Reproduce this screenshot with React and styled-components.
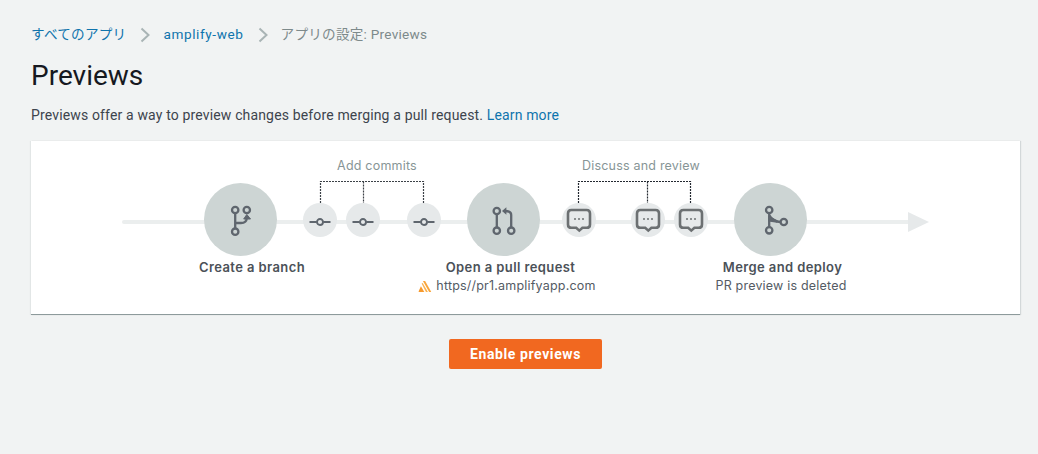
import React from "react";
import styled, { createGlobalStyle } from "styled-components";

const GlobalStyle = createGlobalStyle`
  html, body {
    margin: 0;
    padding: 0;
    background: #f1f3f3;
    font-family: Roboto, "Noto Sans CJK JP", sans-serif;
  }
`;

const Page = styled.div`
  box-sizing: border-box;
  width: 1038px;
  height: 454px;
  padding: 26px 18px 0 31px;
  overflow: hidden;
`;

const Breadcrumbs = styled.nav`
  display: flex;
  align-items: center;
  height: 17px;
  font-size: 13.6px;
  line-height: 17px;
  letter-spacing: 0.2px;
`;

const Crumb = styled.a`
  color: ${(p) => (p.$current ? "#7d8a8b" : "#0f74ad")};
  letter-spacing: ${(p) => (p.$wide ? 0.6 : 0.25)}px;
  white-space: nowrap;
`;

const Chevron = styled.svg`
  display: block;
  width: 10px;
  height: 16px;
  margin: 0 13px 0 14px;
  fill: none;
  stroke: #a9b4b5;
  stroke-width: 2;
`;

const Title = styled.h1`
  margin: 16px 0 0;
  font-size: 28px;
  line-height: 34px;
  font-weight: 400;
  color: #16191f;
`;

const Intro = styled.p`
  margin: 13px 0 0;
  font-size: 14px;
  line-height: 18px;
  letter-spacing: 0.15px;
  color: #3d444d;
`;

const Link = styled.a`
  color: #0f74ad;
`;

const Card = styled.section`
  margin-top: 17px;
  height: 173px;
  background: #fff;
  border-bottom: 1px solid #8d9a9b;
  box-shadow: 1px 0 1px rgba(0, 28, 36, 0.12), -1px 0 1px rgba(0, 28, 36, 0.06);
`;

/* free canvas: everything inside is a node of the diagram */
const Diagram = styled.div`
  position: relative;
  width: 100%;
  height: 100%;
`;

const Wires = styled.svg`
  position: absolute;
  left: 0;
  top: 0;
  width: 989px;
  height: 173px;
`;

const Node = styled.div`
  position: absolute;
  left: ${(p) => p.$x}px;
  top: ${(p) => (p.$big ? 42 : 62)}px;
  width: ${(p) => (p.$big ? 73 : 34)}px;
  height: ${(p) => (p.$big ? 73 : 34)}px;
  margin-left: ${(p) => (p.$big ? -36.5 : -17)}px;
  border-radius: 50%;
  background: ${(p) => (p.$big ? "#cdd5d4" : "#e6e9ea")};
  display: flex;
  align-items: center;
  justify-content: center;
`;

const Glyph = styled.svg`
  display: block;
  width: 40px;
  height: 40px;
  flex: none;
  fill: none;
  stroke: ${(p) => p.$color || "#5f666e"};
  stroke-width: ${(p) => p.$stroke || 2.3};
`;

const Label = styled.div`
  position: absolute;
  left: ${(p) => p.$x}px;
  top: ${(p) => p.$y}px;
  transform: translateX(-50%);
  display: flex;
  align-items: center;
  gap: 5px;
  white-space: nowrap;
  font-family: Inter, "Noto Sans", sans-serif;
  font-size: ${(p) => (p.$bold ? 13 : 12.5)}px;
  line-height: 16px;
  letter-spacing: ${(p) => (p.$bold ? 0.4 : 0.2)}px;
  font-weight: ${(p) => (p.$bold ? 600 : 400)};
  color: ${(p) => (p.$note ? "#879596" : p.$bold ? "#4b5158" : "#545b64")};
`;

const Actions = styled.div`
  display: flex;
  justify-content: center;
  margin-top: 24px;
`;

const Button = styled.button`
  width: 153px;
  height: 30px;
  border: 0;
  border-radius: 2px;
  background: #f16820;
  color: #fff;
  font-family: Roboto, sans-serif;
  font-size: 14px;
  font-weight: 700;
  letter-spacing: 0.6px;
  cursor: pointer;
`;

const Ring = ({ x, y }) => <circle cx={x} cy={y} r="3.2" />;

const BranchIcon = () => (
  <Glyph viewBox="-20 -20 40 40">
    <Ring x={-5.8} y={-10} />
    <Ring x={5.8} y={-10} />
    <Ring x={-5.8} y={11.7} />
    <path d="M-5.8 -6.8V8.5M-5.8 3H0Q5.5 3 5.8 -2" />
    <path d="M2.7 -1L5.8 -5.5L9.5 -1Z" fill="#5f666e" strokeWidth="1" />
  </Glyph>
);

const PullIcon = () => (
  <Glyph viewBox="-20 -20 40 40">
    <Ring x={-7.2} y={-9} />
    <Ring x={-7.2} y={10.7} />
    <Ring x={7.2} y={10.7} />
    <path d="M-7.2 -5.8V7.5M7.2 7.5V-5C7.2 -8 5 -9 1 -9" />
    <path d="M-2 -9L2.4 -12.8V-5.2Z" fill="#5f666e" stroke="none" />
  </Glyph>
);

const MergeIcon = () => (
  <Glyph viewBox="-20 -20 40 40">
    <Ring x={-1.8} y={-10} />
    <Ring x={-1.8} y={10.3} />
    <Ring x={12.8} y={2} />
    <path d="M-1.8 -6.8V7.1M9.6 2C5 2 0 -1 -1.8 -5" />
    <path d="M-2.6 -4L-.8 -3.6L7 .8L6 2.8L-2.6 1.4Z" fill="#5f666e" stroke="none" />
  </Glyph>
);

const CommitIcon = () => (
  <Glyph viewBox="-20 -20 40 40" $stroke={1.9}>
    <path d="M-10.5 2H-3.2M3.2 2H10.5" />
    <circle cx="0" cy="2" r="3" />
  </Glyph>
);

const CommentIcon = () => (
  <Glyph viewBox="-20 -20 40 40" $color="#6c7072" $stroke={2.6}>
    <path d="M-7.6 -10H7.6Q11 -10 11 -6.6V4.4Q11 7.8 7.6 7.8H3.4L.3 10.6L-2.8 7.8H-7.6Q-11 7.8 -11 4.4V-6.6Q-11 -10 -7.6 -10Z" />
    <circle cx="-4" cy="-1" r="1" fill="#6c7072" stroke="none" />
    <circle cx="0" cy="-1" r="1" fill="#6c7072" stroke="none" />
    <circle cx="4" cy="-1" r="1" fill="#6c7072" stroke="none" />
  </Glyph>
);

const AmplifyLogo = () => (
  <svg width="13" height="11" viewBox="0 0 13 11" style={{ display: "block" }}>
    <path d="M4.6 0H6.8L13 11H10.8Z" fill="#f9a63c" />
    <path d="M3.3 2.4L4.4 1.9L9.6 11H7.6Z" fill="#fbb24e" />
    <path d="M2.6 5.2L6 11H0Z" fill="#f79a2e" />
  </svg>
);

const commits = [289, 332, 393];
const comments = [548, 617, 660];

function App() {
  return (
    <Page>
      <GlobalStyle />
      <Breadcrumbs>
        <Crumb>すべてのアプリ</Crumb>
        <Chevron viewBox="0 0 10 16">
          <path d="M1.5 1.5L8.5 8L1.5 14.5" />
        </Chevron>
        <Crumb $wide>amplify-web</Crumb>
        <Chevron viewBox="0 0 10 16">
          <path d="M1.5 1.5L8.5 8L1.5 14.5" />
        </Chevron>
        <Crumb $current>アプリの設定: Previews</Crumb>
      </Breadcrumbs>
      <Title>Previews</Title>
      <Intro>
        Previews offer a way to preview changes before merging a pull request.{" "}
        <Link>Learn more</Link>
      </Intro>
      <Card>
        <Diagram>
          <Wires viewBox="0 0 989 173">
            <rect x="91" y="79" width="790" height="4" rx="2" fill="#ebeeee" />
            <path d="M877 71L898 81L877 91Z" fill="#e6e9ea" />
            <path
              d="M289.5 62V40.5H392.5V62M332.5 40.5V62"
              fill="none"
              stroke="#3c4147"
              strokeDasharray="2 1"
              strokeWidth="1.2"
            />
            <path
              d="M547.5 62V40.5H659.5V62M616.5 40.5V62"
              fill="none"
              stroke="#232830"
              strokeDasharray="2 1"
              strokeWidth="1.2"
            />
          </Wires>

          <Node $big $x={209.5}>
            <BranchIcon />
          </Node>
          {commits.map((x) => (
            <Node key={x} $x={x}>
              <CommitIcon />
            </Node>
          ))}
          <Node $big $x={472.5}>
            <PullIcon />
          </Node>
          {comments.map((x) => (
            <Node key={x} $x={x}>
              <CommentIcon />
            </Node>
          ))}
          <Node $big $x={739.5}>
            <MergeIcon />
          </Node>

          <Label $note $x={346} $y={17}>Add commits</Label>
          <Label $note $x={610} $y={17}>Discuss and review</Label>
          <Label $bold $x={221} $y={118}>Create a branch</Label>
          <Label $bold $x={479.5} $y={118}>Open a pull request</Label>
          <Label $x={476} $y={137}>
            <AmplifyLogo />
            https//pr1.amplifyapp.com
          </Label>
          <Label $bold $x={751.5} $y={118}>Merge and deploy</Label>
          <Label $x={750} $y={137}>PR preview is deleted</Label>
        </Diagram>
      </Card>
      <Actions>
        <Button>Enable previews</Button>
      </Actions>
    </Page>
  );
}

export default App;
